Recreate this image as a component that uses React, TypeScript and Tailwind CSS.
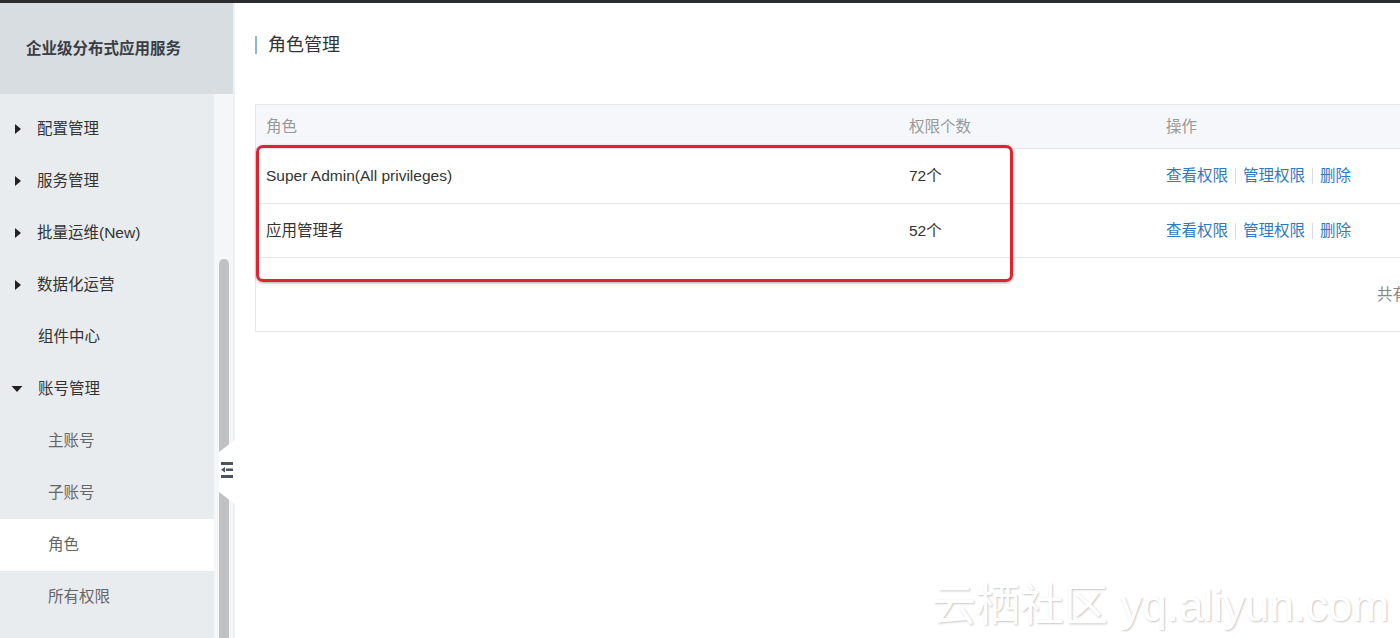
import React from "react";

const font = { fontFamily: '"Liberation Sans", "Noto Sans CJK SC", sans-serif' };

function RightTri() {
  return (
    <svg width="8" height="12" viewBox="0 0 8 12" className="mr-[15px] ml-[14px]">
      <path d="M1 1 L7 6 L1 11 Z" fill="#222" />
    </svg>
  );
}
function DownTri() {
  return (
    <svg width="12" height="8" viewBox="0 0 12 8" className="mr-[15px] ml-[11px]">
      <path d="M0.5 1 L11.5 1 L6 7 Z" fill="#222" />
    </svg>
  );
}

type Item = { label: string; kind: "closed" | "open" | "none" | "sub"; active?: boolean };
const items: Item[] = [
  { label: "配置管理", kind: "closed" },
  { label: "服务管理", kind: "closed" },
  { label: "批量运维(New)", kind: "closed" },
  { label: "数据化运营", kind: "closed" },
  { label: "组件中心", kind: "none" },
  { label: "账号管理", kind: "open" },
  { label: "主账号", kind: "sub" },
  { label: "子账号", kind: "sub" },
  { label: "角色", kind: "sub", active: true },
  { label: "所有权限", kind: "sub" },
];

function Actions() {
  return (
    <div className="flex items-center text-[15.5px] text-[#2f78c4]">
      <span>查看权限</span>
      <span className="mx-[7px] h-[16px] w-px bg-[#d8dbe0]" />
      <span>管理权限</span>
      <span className="mx-[7px] h-[16px] w-px bg-[#d8dbe0]" />
      <span>删除</span>
    </div>
  );
}

export default function App() {
  return (
    <div style={font} className="w-[1400px] h-[638px] overflow-hidden bg-white flex flex-col relative">
      <div className="h-[3px] bg-[#2b2e31] shrink-0" />
      <div className="flex flex-1 min-h-0">
        {/* Sidebar */}
        <div className="w-[233px] shrink-0 flex flex-col relative">
          <div className="h-[91px] bg-[#d8dde2] flex items-center pl-[26px] text-[15.5px] font-bold text-[#3a3d42] shrink-0 pt-[1px]">
            企业级分布式应用服务
          </div>
          <div className="flex flex-1 min-h-0">
            <div className="w-[214px] bg-[#e9ecef] pt-[9px]">
              {items.map((it) => (
                <div
                  key={it.label}
                  className={`h-[52px] flex items-center text-[15.5px] ${
                    it.active ? "bg-white" : ""
                  } ${it.kind === "sub" ? "pl-[48px] text-[#666]" : "text-[#333]"}`}
                >
                  {it.kind === "closed" && <RightTri />}
                  {it.kind === "open" && <DownTri />}
                  {it.kind === "none" && <span className="w-[38px]" />}
                  <span>{it.label}</span>
                </div>
              ))}
            </div>
            <div className="w-[19px] bg-[#f5f6f7] pt-[165px] pl-[5px]">
              <div className="w-[10px] h-[400px] bg-[#c1c1c1] rounded-t-[5px]" />
            </div>
          </div>
          {/* collapse notch */}
          <div className="absolute left-[217px] top-[437px] w-[18px] h-[64px]">
            <svg width="18" height="64" viewBox="0 0 18 64">
              <path d="M18 0 L18 64 L2 52 L2 12 Z" fill="#ffffff" />
              <rect x="4" y="22" width="12" height="3" fill="#4a5360" />
              <rect x="4" y="35" width="12" height="3" fill="#4a5360" />
              <rect x="9" y="28.5" width="7" height="2.5" fill="#4a5360" />
              <path d="M4 29.75 L8 27 L8 32.5 Z" fill="#4a5360" />
            </svg>
          </div>
        </div>
        <div className="w-[2px] bg-[#eef0f2] shrink-0" />
        {/* Main */}
        <div className="flex-1 min-w-0 overflow-hidden pl-[20px]">
          <div className="h-[101px] pt-[33px]">
            <div className="flex items-center h-[18px]">
              <div className="w-[2px] h-[18px] bg-[#8ab6de] mr-[11px]" />
              <span className="text-[18px] text-[#333]">角色管理</span>
            </div>
          </div>
          <div className="w-[1220px] border border-[#e3e6ea] relative">
            <div className="h-[44px] bg-[#f5f7fa] border-b border-[#e3e6ea] flex items-center text-[15.5px] text-[#999]">
              <div className="w-[643px] pl-[10px]">角色</div>
              <div className="w-[257px] pl-[10px]">权限个数</div>
              <div className="pl-[10px]">操作</div>
            </div>
            {[
              { name: "Super Admin(All privileges)", n: "72个", h: "h-[55px]" },
              { name: "应用管理者", n: "52个", h: "h-[54px]" },
            ].map((r) => (
              <div key={r.name} className={`${r.h} border-b border-[#e3e6ea] flex items-center text-[15.5px] text-[#333]`}>
                <div className="w-[643px] pl-[10px]">{r.name}</div>
                <div className="w-[257px] pl-[10px]">{r.n}</div>
                <div className="pl-[10px]">
                  <Actions />
                </div>
              </div>
            ))}
            <div className="h-[73px] flex items-center pl-[1121px] text-[15.5px] text-[#888] whitespace-nowrap pt-[1px]">
              共有 2 条记录
            </div>
            {/* red highlight box */}
            <div className="absolute left-[0px] top-[40px] w-[757px] h-[137px] border-[3px] border-[#e8202e] rounded-[7px] shadow-[0_1px_3px_rgba(0,0,0,0.35)]" />
          </div>
        </div>
      </div>
      {/* watermark */}
      <div
        className="absolute left-[932px] top-[580px] text-[44px] leading-[52px] text-white whitespace-nowrap"
        style={{ textShadow: "1px 1px 2px rgba(0,0,0,0.22)" }}
      >
        云栖社区 yq.aliyun.com
      </div>
    </div>
  );
}
